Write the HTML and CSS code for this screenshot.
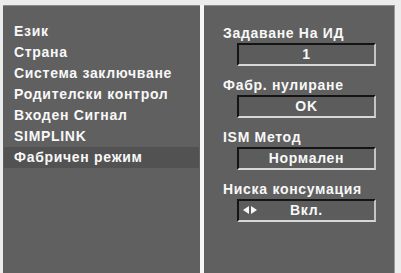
FILE: index.html
```html
<!DOCTYPE html>
<html lang="bg">
  <head>
    <meta charset="UTF-8" />
    <meta name="viewport" content="width=device-width, initial-scale=1.0" />
    <title>Опция</title>
    <link rel="stylesheet" href="styles.css">
  </head>
  <body>
    <div class="screen">
      <div class="menu">
        <div class="item">Език</div>
        <div class="item">Страна</div>
        <div class="item">Система заключване</div>
        <div class="item">Родителски контрол</div>
        <div class="item">Входен Сигнал</div>
        <div class="item">SIMPLINK</div>
        <div class="item active">Фабричен режим</div>
      </div>
      <div class="divider"></div>
      <div class="options">
        <div class="option">
          <div class="label">Задаване На ИД</div>
          <div class="field">1</div>
        </div>
        <div class="option">
          <div class="label">Фабр. нулиране</div>
          <div class="field">OK</div>
        </div>
        <div class="option">
          <div class="label">ISM Метод</div>
          <div class="field">Нормален</div>
        </div>
        <div class="option">
          <div class="label">Ниска консумация</div>
          <div class="field">
            <span class="arrows"><span class="tri left"></span><span class="tri right"></span></span>
            Вкл.
          </div>
        </div>
      </div>
    </div>
  </body>
</html>
```

FILE: styles.css
```css
* {
  margin: 0;
  padding: 0;
  box-sizing: border-box;
}
body {
  width: 401px;
  height: 273px;
  background-color: #ececec;
  font-family: "Liberation Sans", Arial, sans-serif;
  font-weight: bold;
  font-size: 14px;
  letter-spacing: 0.7px;
  color: #f8f8f8;
  overflow: hidden;
}
.screen {
  display: flex;
  height: 273px;
  padding: 5px 6px 0 3px;
}
.menu {
  width: 197px;
  background-color: #606060;
  border-top: 1px solid #8a8a8a;
  padding-top: 15px;
}
.item {
  height: 21px;
  line-height: 21px;
  padding-left: 10px;
  margin: 0 1px;
  white-space: nowrap;
}
.item.active {
  background-color: #525252;
}
.divider {
  width: 4px;
  background-color: #f6f6f6;
}
.options {
  flex: 1;
  background-color: #606060;
  border-top: 1px solid #8a8a8a;
  border-right: 1px solid #9a9a9a;
  padding: 17px 0 0 19px;
  display: flex;
  flex-direction: column;
  gap: 9px;
}
.label {
  height: 20px;
  line-height: 20px;
  white-space: nowrap;
}
.field {
  position: relative;
  width: 139px;
  height: 23px;
  margin-left: 14px;
  border-top: 2px solid #141414;
  border-left: 2px solid #141414;
  border-bottom: 2px solid #d8d8d8;
  border-right: 2px solid #c4c4c4;
  background-color: #5c5c5c;
  text-align: center;
  line-height: 19px;
}
.arrows {
  position: absolute;
  left: 4px;
  top: 5px;
  display: flex;
  gap: 2px;
}
.tri {
  width: 0;
  height: 0;
  border-top: 4px solid transparent;
  border-bottom: 4px solid transparent;
}
.tri.left {
  border-right: 6px solid #f8f8f8;
}
.tri.right {
  border-left: 6px solid #f8f8f8;
}
```
